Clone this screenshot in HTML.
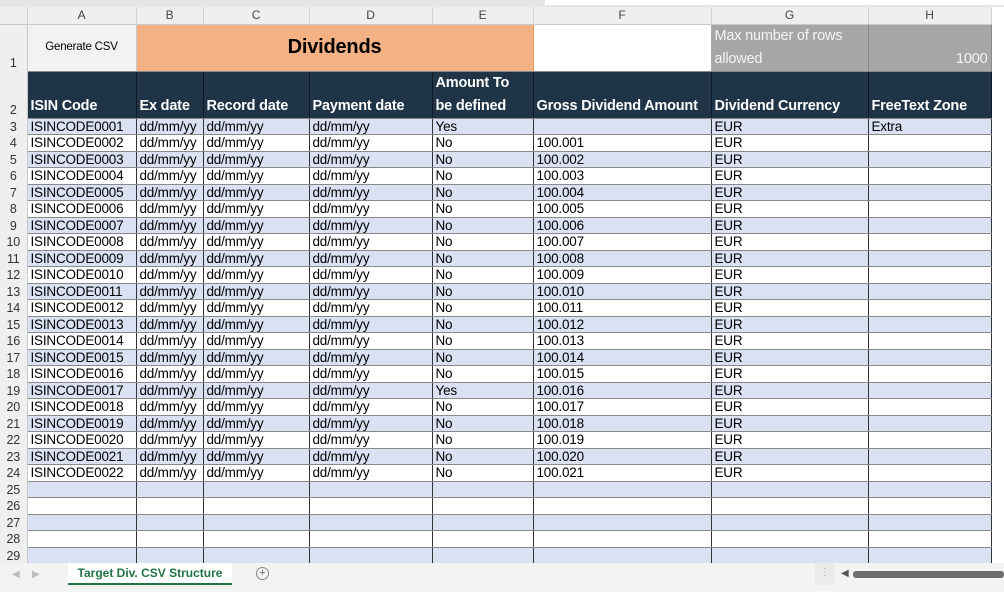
<!DOCTYPE html>
<html><head><meta charset="utf-8"><style>
*{margin:0;padding:0;box-sizing:border-box}
body{width:1004px;height:592px;overflow:hidden;background:#fff;font-family:"Liberation Sans",sans-serif;position:relative}
.top{position:absolute;left:0;top:0;width:1004px;height:8px;background:#e6e6e6}
.top div{position:absolute;left:545px;top:0;width:459px;height:5px;background:#fff}
table{position:absolute;left:0;top:7px;border-collapse:collapse;table-layout:fixed}
td{padding:0 3px;white-space:nowrap;overflow:hidden;font-size:13.5px;color:#000;border-right:1px solid #333;border-bottom:1px solid #8a8a8a;height:16.5px;line-height:15px;letter-spacing:-0.2px}
td.rh{background:#efefef;color:#333;text-align:center;border-right:1px solid #c8c8c8;border-bottom:none;padding:0;font-size:12.5px;vertical-align:bottom}
tr.ch td{height:17px;background:#efefef;color:#444;text-align:center;font-size:12px;border-right:1px solid #d4d4d4;border-bottom:1px solid #c8c8c8;vertical-align:middle}
tr.s td:not(.rh){background:#d9e1f2}
tr.h td:not(.rh){background:#1f3446;color:#fff;font-weight:bold;font-size:14.5px;vertical-align:bottom;line-height:23px;border-right:1px solid #0d1822}
.tab{position:absolute;left:0;top:563px;width:1004px;height:29px;background:#f3f3f3}
</style></head><body>
<div class="top"><div></div></div>
<table>
<colgroup><col style="width:27px"><col style="width:109px"><col style="width:67px"><col style="width:106px"><col style="width:123px"><col style="width:101px"><col style="width:178px"><col style="width:157px"><col style="width:123px"><col style="width:13px"></colgroup>
<tr class="ch"><td></td><td>A</td><td>B</td><td>C</td><td>D</td><td>E</td><td>F</td><td>G</td><td>H</td><td style="border:none;background:#fff"></td></tr>
<tr><td class="rh" style="height:44px">1</td><td style="background:#f2f2f2;text-align:center;font-size:11.5px;border-right:1px solid #ccc">Generate CSV</td><td colspan="4" style="background:#f4b183;text-align:center;font-weight:bold;font-size:20px;border-right:1px solid #e59a6a">Dividends</td><td style="background:#fff;border-right:1px solid #aaa"></td><td style="background:#a6a6a6;color:#f4f4f4;font-size:14.5px;line-height:23px;border-right:1px solid #888">Max number of rows<br>allowed</td><td style="background:#a6a6a6;color:#f4f4f4;font-size:14.5px;text-align:right;vertical-align:bottom;line-height:23px;border-right:1px solid #888">1000</td><td style="border:none"></td></tr>
<tr class="h"><td class="rh" style="height:46px">2</td><td>ISIN Code</td><td>Ex date</td><td>Record date</td><td>Payment date</td><td>Amount To<br>be defined</td><td>Gross Dividend Amount</td><td>Dividend Currency</td><td>FreeText Zone</td><td style="border:none;background:#fff"></td></tr>
<tr class="s"><td class="rh">3</td><td>ISINCODE0001</td><td>dd/mm/yy</td><td>dd/mm/yy</td><td>dd/mm/yy</td><td>Yes</td><td></td><td>EUR</td><td>Extra</td><td style="border:none;background:#fff"></td></tr>
<tr><td class="rh">4</td><td>ISINCODE0002</td><td>dd/mm/yy</td><td>dd/mm/yy</td><td>dd/mm/yy</td><td>No</td><td>100.001</td><td>EUR</td><td></td><td style="border:none"></td></tr>
<tr class="s"><td class="rh">5</td><td>ISINCODE0003</td><td>dd/mm/yy</td><td>dd/mm/yy</td><td>dd/mm/yy</td><td>No</td><td>100.002</td><td>EUR</td><td></td><td style="border:none;background:#fff"></td></tr>
<tr><td class="rh">6</td><td>ISINCODE0004</td><td>dd/mm/yy</td><td>dd/mm/yy</td><td>dd/mm/yy</td><td>No</td><td>100.003</td><td>EUR</td><td></td><td style="border:none"></td></tr>
<tr class="s"><td class="rh">7</td><td>ISINCODE0005</td><td>dd/mm/yy</td><td>dd/mm/yy</td><td>dd/mm/yy</td><td>No</td><td>100.004</td><td>EUR</td><td></td><td style="border:none;background:#fff"></td></tr>
<tr><td class="rh">8</td><td>ISINCODE0006</td><td>dd/mm/yy</td><td>dd/mm/yy</td><td>dd/mm/yy</td><td>No</td><td>100.005</td><td>EUR</td><td></td><td style="border:none"></td></tr>
<tr class="s"><td class="rh">9</td><td>ISINCODE0007</td><td>dd/mm/yy</td><td>dd/mm/yy</td><td>dd/mm/yy</td><td>No</td><td>100.006</td><td>EUR</td><td></td><td style="border:none;background:#fff"></td></tr>
<tr><td class="rh">10</td><td>ISINCODE0008</td><td>dd/mm/yy</td><td>dd/mm/yy</td><td>dd/mm/yy</td><td>No</td><td>100.007</td><td>EUR</td><td></td><td style="border:none"></td></tr>
<tr class="s"><td class="rh">11</td><td>ISINCODE0009</td><td>dd/mm/yy</td><td>dd/mm/yy</td><td>dd/mm/yy</td><td>No</td><td>100.008</td><td>EUR</td><td></td><td style="border:none;background:#fff"></td></tr>
<tr><td class="rh">12</td><td>ISINCODE0010</td><td>dd/mm/yy</td><td>dd/mm/yy</td><td>dd/mm/yy</td><td>No</td><td>100.009</td><td>EUR</td><td></td><td style="border:none"></td></tr>
<tr class="s"><td class="rh">13</td><td>ISINCODE0011</td><td>dd/mm/yy</td><td>dd/mm/yy</td><td>dd/mm/yy</td><td>No</td><td>100.010</td><td>EUR</td><td></td><td style="border:none;background:#fff"></td></tr>
<tr><td class="rh">14</td><td>ISINCODE0012</td><td>dd/mm/yy</td><td>dd/mm/yy</td><td>dd/mm/yy</td><td>No</td><td>100.011</td><td>EUR</td><td></td><td style="border:none"></td></tr>
<tr class="s"><td class="rh">15</td><td>ISINCODE0013</td><td>dd/mm/yy</td><td>dd/mm/yy</td><td>dd/mm/yy</td><td>No</td><td>100.012</td><td>EUR</td><td></td><td style="border:none;background:#fff"></td></tr>
<tr><td class="rh">16</td><td>ISINCODE0014</td><td>dd/mm/yy</td><td>dd/mm/yy</td><td>dd/mm/yy</td><td>No</td><td>100.013</td><td>EUR</td><td></td><td style="border:none"></td></tr>
<tr class="s"><td class="rh">17</td><td>ISINCODE0015</td><td>dd/mm/yy</td><td>dd/mm/yy</td><td>dd/mm/yy</td><td>No</td><td>100.014</td><td>EUR</td><td></td><td style="border:none;background:#fff"></td></tr>
<tr><td class="rh">18</td><td>ISINCODE0016</td><td>dd/mm/yy</td><td>dd/mm/yy</td><td>dd/mm/yy</td><td>No</td><td>100.015</td><td>EUR</td><td></td><td style="border:none"></td></tr>
<tr class="s"><td class="rh">19</td><td>ISINCODE0017</td><td>dd/mm/yy</td><td>dd/mm/yy</td><td>dd/mm/yy</td><td>Yes</td><td>100.016</td><td>EUR</td><td></td><td style="border:none;background:#fff"></td></tr>
<tr><td class="rh">20</td><td>ISINCODE0018</td><td>dd/mm/yy</td><td>dd/mm/yy</td><td>dd/mm/yy</td><td>No</td><td>100.017</td><td>EUR</td><td></td><td style="border:none"></td></tr>
<tr class="s"><td class="rh">21</td><td>ISINCODE0019</td><td>dd/mm/yy</td><td>dd/mm/yy</td><td>dd/mm/yy</td><td>No</td><td>100.018</td><td>EUR</td><td></td><td style="border:none;background:#fff"></td></tr>
<tr><td class="rh">22</td><td>ISINCODE0020</td><td>dd/mm/yy</td><td>dd/mm/yy</td><td>dd/mm/yy</td><td>No</td><td>100.019</td><td>EUR</td><td></td><td style="border:none"></td></tr>
<tr class="s"><td class="rh">23</td><td>ISINCODE0021</td><td>dd/mm/yy</td><td>dd/mm/yy</td><td>dd/mm/yy</td><td>No</td><td>100.020</td><td>EUR</td><td></td><td style="border:none;background:#fff"></td></tr>
<tr><td class="rh">24</td><td>ISINCODE0022</td><td>dd/mm/yy</td><td>dd/mm/yy</td><td>dd/mm/yy</td><td>No</td><td>100.021</td><td>EUR</td><td></td><td style="border:none"></td></tr>
<tr class="s"><td class="rh">25</td><td></td><td></td><td></td><td></td><td></td><td></td><td></td><td></td><td style="border:none;background:#fff"></td></tr>
<tr><td class="rh">26</td><td></td><td></td><td></td><td></td><td></td><td></td><td></td><td></td><td style="border:none"></td></tr>
<tr class="s"><td class="rh">27</td><td></td><td></td><td></td><td></td><td></td><td></td><td></td><td></td><td style="border:none;background:#fff"></td></tr>
<tr><td class="rh">28</td><td></td><td></td><td></td><td></td><td></td><td></td><td></td><td></td><td style="border:none"></td></tr>
<tr class="s"><td class="rh">29</td><td></td><td></td><td></td><td></td><td></td><td></td><td></td><td></td><td style="border:none;background:#fff"></td></tr>
</table>
<div class="tab">
<span style="position:absolute;left:12px;top:6px;color:#bbb;font-size:10px">&#9664;</span>
<span style="position:absolute;left:32px;top:6px;color:#bbb;font-size:10px">&#9654;</span>
<div style="position:absolute;left:68px;top:0;width:164px;height:22px;background:#fff;border-bottom:2px solid #217346;color:#217346;font-weight:bold;font-size:12px;text-align:center;line-height:20px">Target Div. CSV Structure</div>
<div style="position:absolute;left:256px;top:4px;width:13px;height:13px;border:1px solid #888;border-radius:50%;color:#666;font-size:11px;line-height:11px;text-align:center">+</div>
<div style="position:absolute;left:815px;top:0;width:20px;height:22px;background:#ebebeb;color:#aaa;font-size:10px;text-align:center;line-height:20px">&#8942;</div>
<span style="position:absolute;left:841px;top:5px;color:#555;font-size:10px">&#9664;</span>
<div style="position:absolute;left:853px;top:8px;width:151px;height:7px;background:#6e6e6e;border-radius:3px"></div>
</div>
</body></html>
